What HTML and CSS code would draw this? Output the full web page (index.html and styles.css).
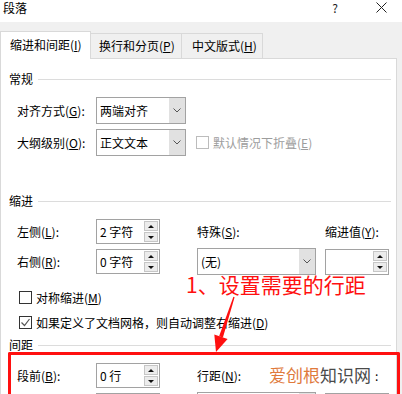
FILE: index.html
```html
<!DOCTYPE html>
<html lang="zh-CN">

<head>
    <meta charset="UTF-8">
    <meta name="viewport" content="width=device-width, initial-scale=1.0">
    <title>段落</title>
    <link rel="stylesheet" href="styles.css">
</head>

<body>
    <div class="dialog">
        <div class="titlebar">
            <span class="title">段落</span>
            <span class="help">?</span>
            <svg class="close" width="11" height="11" viewBox="0 0 11 11">
                <path d="M0.5 0.5 L10.5 10.5 M10.5 0.5 L0.5 10.5" stroke="#222" stroke-width="1" fill="none" />
            </svg>
        </div>

        <div class="main">
            <div class="tabs">
                <div class="tab active">缩进和间距(<u>I</u>)</div>
                <div class="tab">换行和分页(<u>P</u>)</div>
                <div class="tab narrow">中文版式(<u>H</u>)</div>
            </div>

            <div class="panel">
                <div class="section-title">常规</div>
                <div class="general">
                    <label>对齐方式(<u>G</u>):</label>
                    <div class="select">
                        <span>两端对齐</span>
                        <i class="arrow"><svg width="8" height="5" viewBox="0 0 8 5"><polyline points="0.5,0.5 4,4 7.5,0.5" fill="none" stroke="#555" /></svg></i>
                    </div>
                    <span></span>
                    <label>大纲级别(<u>O</u>):</label>
                    <div class="select">
                        <span>正文文本</span>
                        <i class="arrow"><svg width="8" height="5" viewBox="0 0 8 5"><polyline points="0.5,0.5 4,4 7.5,0.5" fill="none" stroke="#555" /></svg></i>
                    </div>
                    <div class="check disabled"><span class="box"></span><span>默认情况下折叠(<u>E</u>)</span></div>
                </div>

                <div class="section-title indent-title">缩进</div>
                <div class="grid">
                    <label>左侧(<u>L</u>):</label>
                    <div class="spin">
                        <span>2 字符</span>
                        <div class="spin-btns"><b class="up"></b><b class="down"></b></div>
                    </div>
                    <span></span>
                    <label>特殊(<u>S</u>):</label>
                    <span></span>
                    <label>缩进值(<u>Y</u>):</label>

                    <label>右侧(<u>R</u>):</label>
                    <div class="spin">
                        <span>0 字符</span>
                        <div class="spin-btns"><b class="up"></b><b class="down"></b></div>
                    </div>
                    <span></span>
                    <div class="select">
                        <span>(无)</span>
                        <i class="arrow"><svg width="8" height="5" viewBox="0 0 8 5"><polyline points="0.5,0.5 4,4 7.5,0.5" fill="none" stroke="#555" /></svg></i>
                    </div>
                    <span></span>
                    <div class="spin tall">
                        <span></span>
                        <div class="spin-btns"><b class="up"></b><b class="down"></b></div>
                    </div>
                </div>

                <div class="checks">
                    <div class="check"><span class="box"></span><span>对称缩进(<u>M</u>)</span></div>
                    <div class="check">
                        <span class="box"><svg width="11" height="11" viewBox="0 0 11 11"><polyline points="1.5,5.5 4.5,8.5 9.5,2" fill="none" stroke="#555" stroke-width="1.2" /></svg></span>
                        <span>如果定义了文档网格，则自动调整右缩进(<u>D</u>)</span>
                    </div>
                </div>

                <div class="section-title spacing-title">间距</div>
                <div class="grid">
                    <label>段前(<u>B</u>):</label>
                    <div class="spin">
                        <span>0 行</span>
                        <div class="spin-btns"><b class="up"></b><b class="down"></b></div>
                    </div>
                    <span></span>
                    <label>行距(<u>N</u>):</label>
                    <span></span>
                    <label class="colon">:</label>

                    <span></span>
                    <div class="spin">
                        <span></span>
                        <div class="spin-btns"><b class="up"></b><b class="down"></b></div>
                    </div>
                    <span></span>
                    <div class="select">
                        <span></span>
                        <i class="arrow"></i>
                    </div>
                    <span></span>
                    <div class="spin tall">
                        <span></span>
                        <div class="spin-btns"><b class="up"></b><b class="down"></b></div>
                    </div>
                </div>
            </div>
        </div>

        <!-- annotation layer -->
        <div class="note">1、设置需要的行距</div>
        <svg class="note-arrow" width="402" height="394" viewBox="0 0 402 394">
            <polygon points="234.6,297.2 233.4,296.8 219.1,336.2 222.9,337.4" fill="#ff1010" />
            <polygon points="216,352 214.3,334.6 227.6,339" fill="#ff1010" />
        </svg>
        <div class="note-box"></div>
        <div class="watermark"><span class="orange">爱创根</span>知识网</div>
    </div>
</body>

</html>
```

FILE: styles.css
```css
* {
    margin: 0;
    padding: 0;
    box-sizing: border-box;
}

body {
    width: 402px;
    height: 394px;
    overflow: hidden;
    background-color: #f0f0f0;
    font-family: "Noto Sans CJK SC", "Noto Sans", sans-serif;
    font-size: 12px;
    color: #000;
}

u {
    text-decoration: underline;
    text-underline-offset: 1px;
}

.dialog {
    position: relative;
    height: 394px;
}

.titlebar {
    height: 22px;
    background-color: #fff;
    display: flex;
    align-items: flex-start;
    padding-left: 3px;
    padding-top: 1px;
    line-height: 14px;
}

.title {
    flex: 1;
}

.help {
    margin-right: 38px;
    color: #222;
}

.close {
    margin-top: 1px;
    margin-right: 15px;
}

.main {
    padding-top: 9px;
    padding-right: 5px;
}

.tabs {
    display: flex;
    align-items: flex-end;
    height: 27px;
}

.tab {
    width: 91px;
    height: 25px;
    padding-left: 8px;
    line-height: 24px;
    border: 1px solid #d9d9d9;
    border-bottom: none;
    border-left: none;
    background-color: #f0f0f0;
}

.tab.narrow {
    width: 81px;
    padding-left: 10px;
}

.tab.active {
    position: relative;
    z-index: 1;
    height: 28px;
    margin-bottom: -1px;
    padding-left: 9px;
    padding-top: 1px;
    border-left: 1px solid #d9d9d9;
    background-color: #fff;
}

.panel {
    width: 397px;
    height: 336px;
    overflow: hidden;
    background-color: #fff;
    border: 1px solid #d9d9d9;
    border-bottom: none;
    padding: 12px 5px 0 8px;
}

.section-title {
    display: flex;
    align-items: center;
    gap: 5px;
    line-height: 16px;
}

.section-title::after {
    content: "";
    flex: 1;
    height: 1px;
    background-color: #dcdcdc;
}

.indent-title {
    margin-top: 37px;
}

.spacing-title {
    margin-top: 7px;
}

.general {
    display: grid;
    grid-template-columns: 79px 90px auto;
    grid-auto-rows: 27px;
    row-gap: 5px;
    align-items: center;
    margin: 10px 0 0 8px;
}

.grid {
    display: grid;
    grid-template-columns: 79px 64px 37px 119px 9px 64px;
    grid-template-rows: 25px 27px;
    row-gap: 4px;
    align-items: center;
    margin: 10px 0 0 8px;
}

.colon {
    padding-left: 50px;
}

.select {
    display: flex;
    height: 27px;
    border: 1px solid #a2a2a2;
    background-color: #fff;
}

.select span {
    flex: 1;
    padding-left: 3px;
    line-height: 25px;
}

.arrow {
    width: 16px;
    display: flex;
    align-items: center;
    justify-content: center;
    background-color: #e1e1e1;
}

.spin {
    display: flex;
    align-items: center;
    height: 25px;
    border: 1px solid #a2a2a2;
    background-color: #fff;
}

.spin.tall {
    height: 26px;
}

.spin span {
    flex: 1;
    padding-left: 3px;
}

.spin-btns {
    display: flex;
    flex-direction: column;
    gap: 1px;
    width: 14px;
    margin-right: 1px;
}

.spin-btns b {
    height: 10px;
    display: flex;
    align-items: center;
    justify-content: center;
    border: 1px solid #c6c6c6;
    background-color: #ececec;
}

.spin-btns b::before {
    content: "";
    border-left: 3px solid transparent;
    border-right: 3px solid transparent;
}

.spin-btns .up::before {
    border-bottom: 3px solid #111;
}

.spin-btns .down::before {
    border-top: 3px solid #111;
}

.check {
    display: flex;
    align-items: center;
    gap: 4px;
    height: 16px;
}

.check .box {
    width: 13px;
    height: 13px;
    border: 1px solid #333;
    background-color: #fff;
    display: flex;
    align-items: center;
    justify-content: center;
}

.check.disabled {
    margin-left: 10px;
    color: #9d9d9d;
}

.check.disabled .box {
    border-color: #bcbcbc;
}

.checks {
    display: flex;
    flex-direction: column;
    gap: 9px;
    margin: 14px 0 0 10px;
}

/* annotation layer */
.note {
    position: absolute;
    left: 186px;
    top: 271px;
    font-size: 21px;
    line-height: 26px;
    color: #ff1010;
    white-space: nowrap;
}

.note-arrow {
    position: absolute;
    left: 0;
    top: 0;
}

.note-box {
    position: absolute;
    left: 8px;
    top: 352px;
    width: 392px;
    height: 60px;
    border: 3px solid #ff1010;
    border-bottom: none;
    border-radius: 2px 2px 0 0;
}

.watermark {
    position: absolute;
    left: 269px;
    top: 364px;
    font-size: 17px;
    line-height: 22px;
    color: #4a4a4a;
}

.watermark .orange {
    color: #e07a3c;
}
```
